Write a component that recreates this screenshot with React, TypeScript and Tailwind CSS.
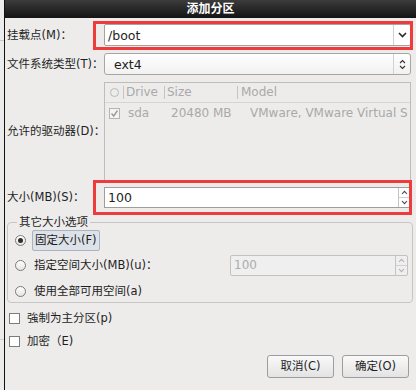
import React from "react";

const Radio = ({ on }: { on?: boolean }) => (
	<span className="flex h-[11px] w-[11px] items-center justify-center rounded-full border border-[#7a7a7a] bg-gradient-to-b from-white to-[#e4e4e4]">
		{on && <span className="h-[5px] w-[5px] rounded-full bg-[#2f2f2f]" />}
	</span>
);

const Check = ({ on, dim }: { on?: boolean; dim?: boolean }) => (
	<span
		className={
			dim
				? "flex h-[11px] w-[11px] items-center justify-center border border-[#b4b4b4] bg-[#f4f4f4]"
				: "flex h-[11px] w-[11px] items-center justify-center border border-[#7c7c7c] bg-white"
		}
	>
		{on && (
			<svg width="9" height="9" viewBox="0 0 9 9">
				<path d="M1.5 4.5 L3.7 7 L7.5 1.5" fill="none" stroke="#9a9a9a" strokeWidth="1.4" />
			</svg>
		)}
	</span>
);

const SpinArrows = ({ dim }: { dim?: boolean }) => (
	<div className="flex w-[12px] flex-col border-l border-[#c4c4c4]">
		<div className="flex flex-1 items-center justify-center border-b border-[#d0d0d0]">
			<svg width="7" height="5" viewBox="0 0 7 5">
				<path d="M1 4 L3.5 1.3 L6 4" fill="none" stroke={dim ? "#b0b0b0" : "#444"} strokeWidth="1.1" />
			</svg>
		</div>
		<div className="flex flex-1 items-center justify-center">
			<svg width="7" height="5" viewBox="0 0 7 5">
				<path d="M1 1 L3.5 3.7 L6 1" fill="none" stroke={dim ? "#b0b0b0" : "#444"} strokeWidth="1.1" />
			</svg>
		</div>
	</div>
);

const RedBox = ({ className }: { className: string }) => (
	<div className={"pointer-events-none absolute border-[3px] border-[#ee3b3b] " + className} />
);

const Label = ({ children }: { children: React.ReactNode }) => (
	<div className="w-[99px] shrink-0 whitespace-nowrap pl-[2px] text-[11.5px]">{children}</div>
);

export default function App() {
	return (
		<div className="flex h-[390px] w-[416px] overflow-hidden bg-[#edeceb] font-['DejaVu_Sans','Noto_Sans_CJK_SC',sans-serif] text-[11.5px] leading-[15px] text-[#1e1e1e]">
			{/* window behind */}
			<div className="flex w-[4px] shrink-0 flex-col bg-[#ececec]">
				<div className="h-[40px]" />
				<div className="h-px bg-[#c8c8c8]" />
				<div className="h-[298px]" />
				<div className="h-px bg-[#d0d0d0]" />
			</div>
			<div className="flex flex-1 flex-col border-l border-[#111]">
				<div className="flex h-[18px] items-center justify-center bg-gradient-to-b from-[#3c3c3c] to-[#141414] text-[12px] font-bold text-white">
					添加分区
				</div>

				<div className="flex flex-col pr-[5px]">
					<div className="mt-[6px] flex h-[22px] items-center">
						<Label>挂载点(M)：</Label>
						<div className="relative flex h-full flex-1">
							<div className="flex flex-1 rounded-[2px] border border-[#a3a3a3] bg-white">
								<div className="flex flex-1 items-center pl-[3px] text-[12.5px]">/boot</div>
								<div className="flex w-[17px] items-center justify-center border-l border-[#cfcfcf]">
									<svg width="9" height="6" viewBox="0 0 9 6">
										<path d="M1 1 L4.5 4.5 L8 1" fill="none" stroke="#2a2a2a" strokeWidth="1.6" />
									</svg>
								</div>
							</div>
							<RedBox className="-top-[3px] -bottom-[4px] -left-[11px] -right-[2px]" />
						</div>
					</div>

					<div className="mt-[7px] flex h-[22px] items-center">
						<Label>文件系统类型(T)：</Label>
						<div className="flex h-full flex-1 rounded-[3px] border border-[#a6a6a6] bg-gradient-to-b from-white to-[#f1f1f1]">
							<div className="flex flex-1 items-center pl-[9px] text-[12.5px]">ext4</div>
							<div className="flex w-[17px] items-center justify-center border-l border-[#d2d2d2]">
								<svg width="7" height="11" viewBox="0 0 7 11">
									<path d="M1 4 L3.5 1.5 L6 4 M1 7 L3.5 9.5 L6 7" fill="none" stroke="#333" strokeWidth="1.1" />
								</svg>
							</div>
						</div>
					</div>

					<div className="mt-[7px] flex h-[99px] items-center">
						<Label>允许的驱动器(D)：</Label>
						<div className="flex h-full flex-1 flex-col border border-[#bdbdbd] text-[12px] text-[#a9a9a9]">
							<div className="flex h-[20px] items-center border-b border-[#d6d6d6]">
								<div className="flex w-[18px] justify-center">
									<span className="h-[9px] w-[9px] rounded-full border border-[#b8b8b8]" />
								</div>
								<div className="h-[13px] w-px bg-[#c4c4c4]" />
								<div className="w-[40px] pl-[2px]">Drive</div>
								<div className="h-[13px] w-px bg-[#c4c4c4]" />
								<div className="w-[72px] pl-[2px]">Size</div>
								<div className="h-[13px] w-px bg-[#c4c4c4]" />
								<div className="pl-[3px]">Model</div>
							</div>
							<div className="flex h-[20px] items-center">
								<div className="flex w-[18px] justify-center">
									<Check on dim />
								</div>
								<div className="w-[48px] pl-[5px]">sda</div>
								<div className="w-[79px]">20480 MB</div>
								<div className="whitespace-nowrap">VMware, VMware Virtual S</div>
							</div>
						</div>
					</div>

					<div className="mt-[6px] flex h-[21px] items-center">
						<Label>大小(MB)(S)：</Label>
						<div className="relative flex h-full flex-1">
							<div className="flex flex-1 border border-[#9e9e9e] bg-white">
								<div className="flex flex-1 items-center pl-[3px] text-[12.5px]">100</div>
								<SpinArrows />
							</div>
							<RedBox className="-top-[7px] -bottom-[7px] -left-[11px] -right-[1px]" />
						</div>
					</div>
				</div>

				<fieldset className="mt-[7px] mr-[3px] ml-[2px] rounded-[4px] border border-[#c6c6c6] pr-[4px] pl-[7px]">
					<legend className="ml-[2px] px-[2px] leading-[15px]">其它大小选项</legend>
					<div className="flex h-[21px] items-center gap-[6px]">
						<Radio on />
						<span className="flex h-full items-center rounded-[2px] border border-[#a9b3c2] bg-[#dde2e9] px-[2px]">固定大小(F)</span>
					</div>
					<div className="mt-[4px] flex h-[21px] items-center gap-[8px]">
						<Radio />
						<span className="flex-1">指定空间大小(MB)(u)：</span>
						<div className="flex h-full w-[178px] rounded-[2px] border border-[#c2c2c2] bg-[#efefef]">
							<div className="flex flex-1 items-center pl-[3px] text-[12px] text-[#acacac]">100</div>
							<SpinArrows dim />
						</div>
					</div>
					<div className="mt-[5px] flex h-[21px] items-center gap-[8px]">
						<Radio />
						<span>使用全部可用空间(a)</span>
					</div>
				</fieldset>

				<div className="mt-[5px] flex h-[20px] items-center gap-[7px] pl-[4px]">
					<Check />
					<span>強制为主分区(p)</span>
				</div>
				<div className="mt-[3px] flex h-[20px] items-center gap-[7px] pl-[4px]">
					<Check />
					<span>加密（E)</span>
				</div>

				<div className="mt-[4px] flex justify-end gap-[8px] pr-[7px]">
					<button className="h-[23px] w-[67px] rounded-[3px] border border-[#9d9d9d] bg-gradient-to-b from-[#f9f9f9] to-[#e3e3e3] text-[11.5px]">
						取消(C)
					</button>
					<button className="h-[23px] w-[67px] rounded-[3px] border border-[#9d9d9d] bg-gradient-to-b from-[#f9f9f9] to-[#e3e3e3] text-[11.5px]">
						确定(O)
					</button>
				</div>
			</div>
		</div>
	);
}
